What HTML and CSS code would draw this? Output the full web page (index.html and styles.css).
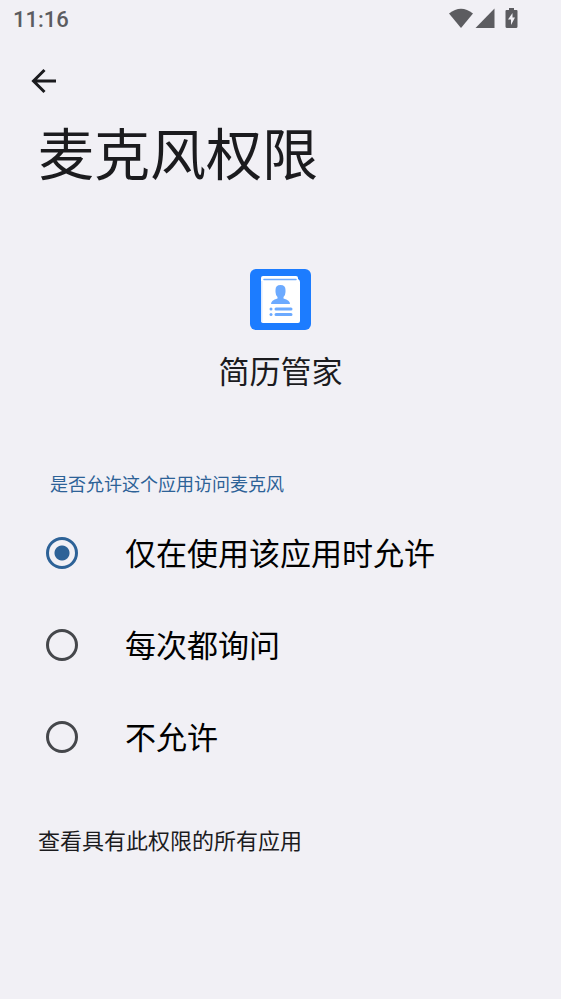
FILE: index.html
```html
<!DOCTYPE html>
<html lang="zh-CN">
<head>
<meta charset="utf-8">
<meta name="viewport" content="width=device-width, initial-scale=1">
<title>麦克风权限</title>
<link rel="stylesheet" href="styles.css">
</head>
<body>
<div class="status">
  <span class="clock">11:16</span>
  <span class="indicators">
    <svg width="24" height="20" viewBox="0 0 24 20" aria-hidden="true"><path d="M0 5.500Q12-4 24 5.500L12 20Z"/></svg>
    <svg width="20" height="20" viewBox="0 0 20 20" aria-hidden="true"><path d="M19.500 .5V20H.5Z"/></svg>
    <svg class="battery" width="13" height="20" viewBox="0 0 13 20" aria-hidden="true"><path fill-rule="evenodd" d="M4 0H9V2H11.500Q12.500 2 12.500 3V18.500Q12.500 20 11 20H2Q.5 20 .5 18.500V3Q.5 2 1.500 2H4ZM7.500 5L3 11.500H6V17L10 9.500H7.500Z"/></svg>
  </span>
</div>
<header class="header">
  <button class="back" type="button" aria-label="返回"><svg width="26" height="26" viewBox="0 0 26 26" aria-hidden="true"><path d="M25 13H3M13.500 2L2.500 13L13.500 24"/></svg></button>
  <h1>麦克风权限</h1>
</header>
<main>
  <section class="app">
    <svg width="61" height="61" viewBox="0 0 61 61" aria-hidden="true">
      <rect width="61" height="61" rx="6" fill="#1c7cff"/>
      <path d="M13 7H46Q48 7 48 9V10Q50 11 50 13V52Q50 54 48 54H13Q11 54 11 52V9Q11 7 13 7Z" fill="#fff"/>
      <path d="M11 12H12.500V53H12Q11 53 11 51Z" fill="#dceaff"/>
      <path d="M14 10.500H46" stroke="#6caaff" stroke-width="1.500" stroke-linecap="round"/>
      <path d="M30.500 16Q35.500 16 35.500 21V23Q35.500 26 33.500 28V29.500Q40 31 40 35H21Q21 31 27.500 29.500V28Q25.500 26 25.500 23V21Q25.500 16 30.500 16Z" fill="#6caaff"/>
      <path d="M26 40H41M26 45.500H41" stroke="#6caaff" stroke-width="3" stroke-linecap="round"/>
      <g fill="#6caaff"><circle cx="21" cy="40" r="1.500"/><circle cx="21" cy="45.500" r="1.500"/></g>
    </svg>
    <h2>简历管家</h2>
  </section>
  <fieldset>
    <legend>是否允许这个应用访问麦克风</legend>
    <label><input type="radio" name="mic" checked><span>仅在使用该应用时允许</span></label>
    <label><input type="radio" name="mic"><span>每次都询问</span></label>
    <label><input type="radio" name="mic"><span>不允许</span></label>
  </fieldset>
  <a class="all" href="#">查看具有此权限的所有应用</a>
</main>
</body>
</html>
```
FILE: styles.css
```css
* { box-sizing: border-box; }
body { margin: 0; min-height: 100vh; background: #f1f0f5; color: #1b1b1e; font-family: Roboto, "Noto Sans CJK SC", sans-serif; }
.status { display: flex; justify-content: space-between; align-items: center; height: 38px; padding: 0 43px 0 13px; color: #5c5c60; }
.clock { font-size: 22px; font-weight: 500; line-height: 24px; padding-top: 2px; }
.indicators { display: flex; align-items: center; gap: 2px; height: 36px; margin-bottom: 2px; fill: #5c5c60; }
.battery { margin-left: 8px; }
svg { display: block; }
.header { padding: 24px 38px 0; }
.back { display: block; margin-left: -7px; padding: 6px 0; border: 0; background: none; color: inherit; }
.back path { fill: none; stroke: currentColor; stroke-width: 3; }
h1 { margin: 16px 0 0; font-size: 56px; font-weight: 400; line-height: 80px; }
.app { display: flex; flex-direction: column; align-items: center; gap: 20px; padding-top: 73px; }
h2 { margin: 0; font-size: 31px; font-weight: 400; line-height: 46px; }
fieldset { margin: 75px 0 0; padding: 0 46px; border: 0; min-width: 0; }
legend { margin-bottom: 8px; padding: 0 4px; font-size: 18px; line-height: 28px; color: #2d6297; }
label { display: flex; align-items: center; gap: 47px; height: 92px; font-size: 31px; color: #000; }
label span { line-height: 44px; padding-top: 4px; }
input { appearance: none; flex: none; width: 32px; height: 32px; margin: 0; border: 3px solid #45474b; border-radius: 50%; }
input:checked { border-color: #2d6297; background: radial-gradient(circle, #2d6297 7px, transparent 8px); }
.all { display: block; margin: 43px 38px; font-size: 22px; line-height: 32px; color: inherit; text-decoration: none; }
```
